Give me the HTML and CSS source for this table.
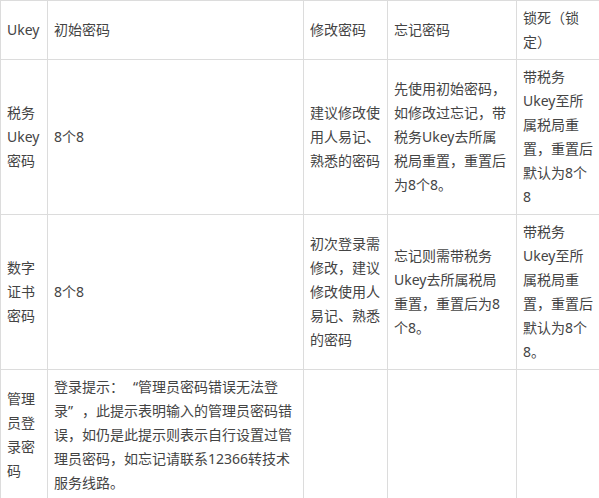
FILE: index.html
```html
<!DOCTYPE html>
<html lang="zh-CN">
<head>
<meta charset="utf-8">
<title>Ukey 密码说明</title>
<link rel="stylesheet" href="styles.css">
</head>
<body>
<table class="pw-table">
  <colgroup>
    <col class="c1"><col class="c2"><col class="c3"><col class="c4"><col class="c5">
  </colgroup>
  <tr>
    <td>Ukey</td>
    <td>初始密码</td>
    <td>修改密码</td>
    <td>忘记密码</td>
    <td>锁死（锁<br>定）</td>
  </tr>
  <tr>
    <td>税务<br>Ukey<br>密码</td>
    <td>8个8</td>
    <td>建议修改使<br>用人易记、<br>熟悉的密码</td>
    <td>先使用初始密码，<br>如修改过忘记，带<br>税务Ukey去所属<br>税局重置，重置后<br>为8个8。</td>
    <td>带税务<br>Ukey至所<br>属税局重<br>置，重置后<br>默认为8个<br>8</td>
  </tr>
  <tr>
    <td>数字<br>证书<br>密码</td>
    <td>8个8</td>
    <td>初次登录需<br>修改，建议<br>修改使用人<br>易记、熟悉<br>的密码</td>
    <td>忘记则需带税务<br>Ukey去所属税局<br>重置，重置后为8<br>个8。</td>
    <td>带税务<br>Ukey至所<br>属税局重<br>置，重置后<br>默认为8个<br>8。</td>
  </tr>
  <tr>
    <td>管理<br>员登<br>录密<br>码</td>
    <td>登录提示：<span class="q q-open">“</span>管理员密码错误无法登<br>录<span class="q q-close">”</span>，此提示表明输入的管理员密码错<br>误，如仍是此提示则表示自行设置过管<br>理员密码，如忘记请联系12366转技术<br>服务线路。</td>
    <td></td>
    <td></td>
    <td></td>
  </tr>
</table>
</body>
</html>
```
FILE: styles.css
```css
html, body {
  margin: 0;
  padding: 0;
  background: #fff;
}
body {
  font-family: "Noto Sans", "Noto Sans CJK SC", sans-serif;
  font-size: 14px;
  line-height: 24px;
  color: #444;
}
.pw-table {
  border-collapse: collapse;
  table-layout: fixed;
  width: 600px;
}
.pw-table .c1 { width: 47px; }
.pw-table .c2 { width: 256px; }
.pw-table .c3 { width: 84px; }
.pw-table .c4 { width: 129px; }
.pw-table .c5 { width: 84px; }
.pw-table td {
  border: 1px solid #dcdcdc;
  padding: 5px 6px;
  vertical-align: middle;
  white-space: nowrap;
  overflow: hidden;
}
.q {
  display: inline-block;
  width: 1em;
}
.q-open { text-align: right; }
.q-close { text-align: left; }
```
